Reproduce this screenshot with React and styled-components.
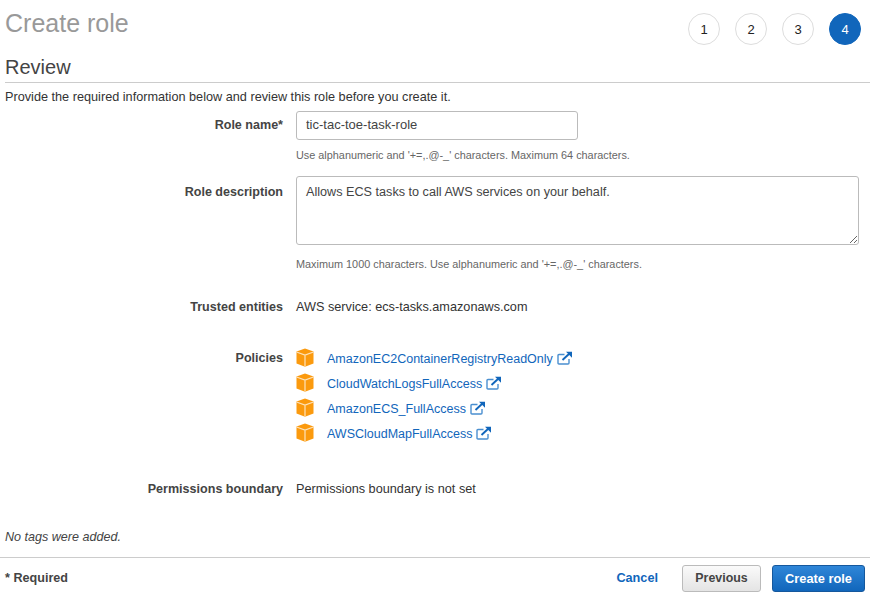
import React from 'react';
import styled, { createGlobalStyle } from 'styled-components';

const GlobalStyle = createGlobalStyle`
  html, body {
    margin: 0;
    padding: 0;
    background: #fff;
    font-family: "Liberation Sans", Arial, sans-serif;
    font-size: 12.7px;
    color: #444;
  }
  * { box-sizing: border-box; }
`;

const policies = [
  'AmazonEC2ContainerRegistryReadOnly',
  'CloudWatchLogsFullAccess',
  'AmazonECS_FullAccess',
  'AWSCloudMapFullAccess',
];

const CubeIcon = () => (
  <svg width="18" height="19" viewBox="0 0 18 19">
    <path d="M9 0.5 L17.5 3.5 V15.5 L9 18.7 L0.5 15.5 V3.5 Z" fill="#fb9a0e" />
    <path d="M0.5 4 L9 7 L17.5 4 M9 7 V18.5" fill="none" stroke="#fde3bb" strokeWidth="1.2" />
  </svg>
);

const ExternalIcon = () => (
  <svg width="16" height="14" viewBox="0 0 16 14" fill="none">
    <path d="M12 8 V12 Q12 13 11 13 H2 Q1 13 1 12 V4.5 Q1 3.5 2 3.5 H7.5" stroke="#4a8fd0" strokeWidth="1.4" />
    <path d="M5.5 9 L13 2" stroke="#1166bb" strokeWidth="1.9" />
    <path d="M9 0.8 H15 V6.8 Z" fill="#1166bb" />
  </svg>
);

const App = () => (
  <Page>
    <GlobalStyle />
    <TopBar>
      <Title>Create role</Title>
      <Steps>
        {[1, 2, 3, 4].map(n => (
          <Step key={n} $active={n === 4}>{n}</Step>
        ))}
      </Steps>
    </TopBar>
    <Main>
      <SectionTitle>Review</SectionTitle>
      <Intro>Provide the required information below and review this role before you create it.</Intro>
      <Row $height={65}>
        <Label $top={6}>Role name*</Label>
        <Field>
          <TextInput readOnly value="tic-tac-toe-task-role" />
          <Hint>Use alphanumeric and '+=,.@-_' characters. Maximum 64 characters.</Hint>
        </Field>
      </Row>
      <Row $height={123}>
        <Label $top={8}>Role description</Label>
        <Field>
          <TextArea readOnly value="Allows ECS tasks to call AWS services on your behalf." />
          <Hint $top={13}>Maximum 1000 characters. Use alphanumeric and '+=,.@-_' characters.</Hint>
        </Field>
      </Row>
      <Row $height={51}>
        <Label>Trusted entities</Label>
        <Value>AWS service: ecs-tasks.amazonaws.com</Value>
      </Row>
      <Row $height={131}>
        <Label>Policies</Label>
        <PolicyList>
          {policies.map(name => (
            <Policy key={name}>
              <CubeIcon />
              <PolicyLink>{name}</PolicyLink>
              <ExternalIcon />
            </Policy>
          ))}
        </PolicyList>
      </Row>
      <Row $height={48}>
        <Label>Permissions boundary</Label>
        <Value>Permissions boundary is not set</Value>
      </Row>
      <NoTags>No tags were added.</NoTags>
    </Main>
    <Footer>
      <Required>* Required</Required>
      <Actions>
        <CancelLink>Cancel</CancelLink>
        <SecondaryButton>Previous</SecondaryButton>
        <PrimaryButton>Create role</PrimaryButton>
      </Actions>
    </Footer>
  </Page>
);

const Page = styled.div`
  width: 870px;
  height: 598px;
  overflow: hidden;
`;

const TopBar = styled.header`
  display: flex;
  justify-content: space-between;
  align-items: flex-start;
  height: 53px;
  padding: 9px 9px 0 5px;
`;

const Title = styled.h1`
  margin: 0;
  font-size: 25px;
  line-height: 29px;
  font-weight: 400;
  color: #999;
`;

const Steps = styled.div`
  display: flex;
  gap: 15px;
  padding-top: 4px;
`;

const Step = styled.div`
  width: 32px;
  height: 32px;
  border-radius: 50%;
  display: flex;
  align-items: center;
  justify-content: center;
  font-size: 13px;
  border: 1px solid ${p => (p.$active ? '#1166bb' : '#ddd')};
  background: ${p => (p.$active ? '#1166bb' : '#fff')};
  color: ${p => (p.$active ? '#fff' : '#222')};
`;

const Main = styled.main`
  padding-left: 5px;
  height: 504px;
`;

const SectionTitle = styled.h2`
  margin: 0;
  height: 30px;
  line-height: 28px;
  font-size: 20px;
  font-weight: 400;
  color: #444;
  border-bottom: 1px solid #ccc;
`;

const Intro = styled.p`
  margin: 0;
  height: 28px;
  padding-top: 7px;
  line-height: 15px;
  color: #333;
`;

const Row = styled.div`
  display: flex;
  height: ${p => p.$height}px;
`;

const Label = styled.div`
  width: 278px;
  flex: none;
  padding-top: ${p => p.$top || 0}px;
  text-align: right;
  font-size: 12.55px;
  font-weight: 700;
  line-height: 16px;
  color: #444;
`;

const Field = styled.div`
  margin-left: 13px;
  flex: 1;
`;

const TextInput = styled.input`
  display: block;
  width: 282px;
  height: 29px;
  padding: 0 9px 2px;
  font: 13px "Liberation Sans", Arial, sans-serif;
  color: #444;
  border: 1px solid #bbb;
  border-radius: 3px;
  outline: none;
`;

const TextArea = styled.textarea`
  display: block;
  width: 563px;
  height: 69px;
  padding: 7px 9px;
  font: 12.65px/16px "Liberation Sans", Arial, sans-serif;
  color: #444;
  border: 1px solid #bbb;
  border-radius: 3px;
  outline: none;
  resize: both;
`;

const Hint = styled.div`
  margin-top: ${p => p.$top || 9}px;
  font-size: 10.87px;
  line-height: 13px;
  color: #666;
`;

const Value = styled.div`
  margin-left: 13px;
  line-height: 16px;
  color: #333;
`;

const PolicyList = styled.div`
  margin: -2px 0 0 13px;
  display: flex;
  flex-direction: column;
  gap: 6px;
`;

const Policy = styled.div`
  display: flex;
  align-items: center;
  height: 19px;
  color: #1166bb;
`;

const PolicyLink = styled.a`
  margin: 0 4px 0 13px;
  font-size: 12.5px;
  line-height: 16px;
  padding-top: 3px;
  color: #1166bb;
`;

const NoTags = styled.div`
  font-style: italic;
  font-size: 12.57px;
  line-height: 16px;
  color: #444;
`;

const Footer = styled.footer`
  display: flex;
  justify-content: space-between;
  align-items: center;
  height: 41px;
  padding: 0 5px;
  border-top: 1px solid #ccc;
`;

const Required = styled.span`
  font-size: 12.6px;
  font-weight: 700;
  color: #444;
`;

const Actions = styled.div`
  display: flex;
  align-items: center;
`;

const CancelLink = styled.a`
  margin-right: 24px;
  font-weight: 700;
  color: #1166bb;
`;

const SecondaryButton = styled.button`
  width: 79px;
  height: 27px;
  margin-right: 11px;
  padding: 0;
  font: 700 12.4px "Liberation Sans", Arial, sans-serif;
  color: #444;
  border: 1px solid #bbb;
  border-radius: 3px;
  background: linear-gradient(#fafafa, #e4e4e4);
`;

const PrimaryButton = styled.button`
  width: 93px;
  height: 27px;
  padding: 0;
  font: 700 12.8px "Liberation Sans", Arial, sans-serif;
  color: #fff;
  border: 1px solid #15589d;
  border-radius: 3px;
  background: linear-gradient(#2f86d8, #1166bb);
`;

export default App;
